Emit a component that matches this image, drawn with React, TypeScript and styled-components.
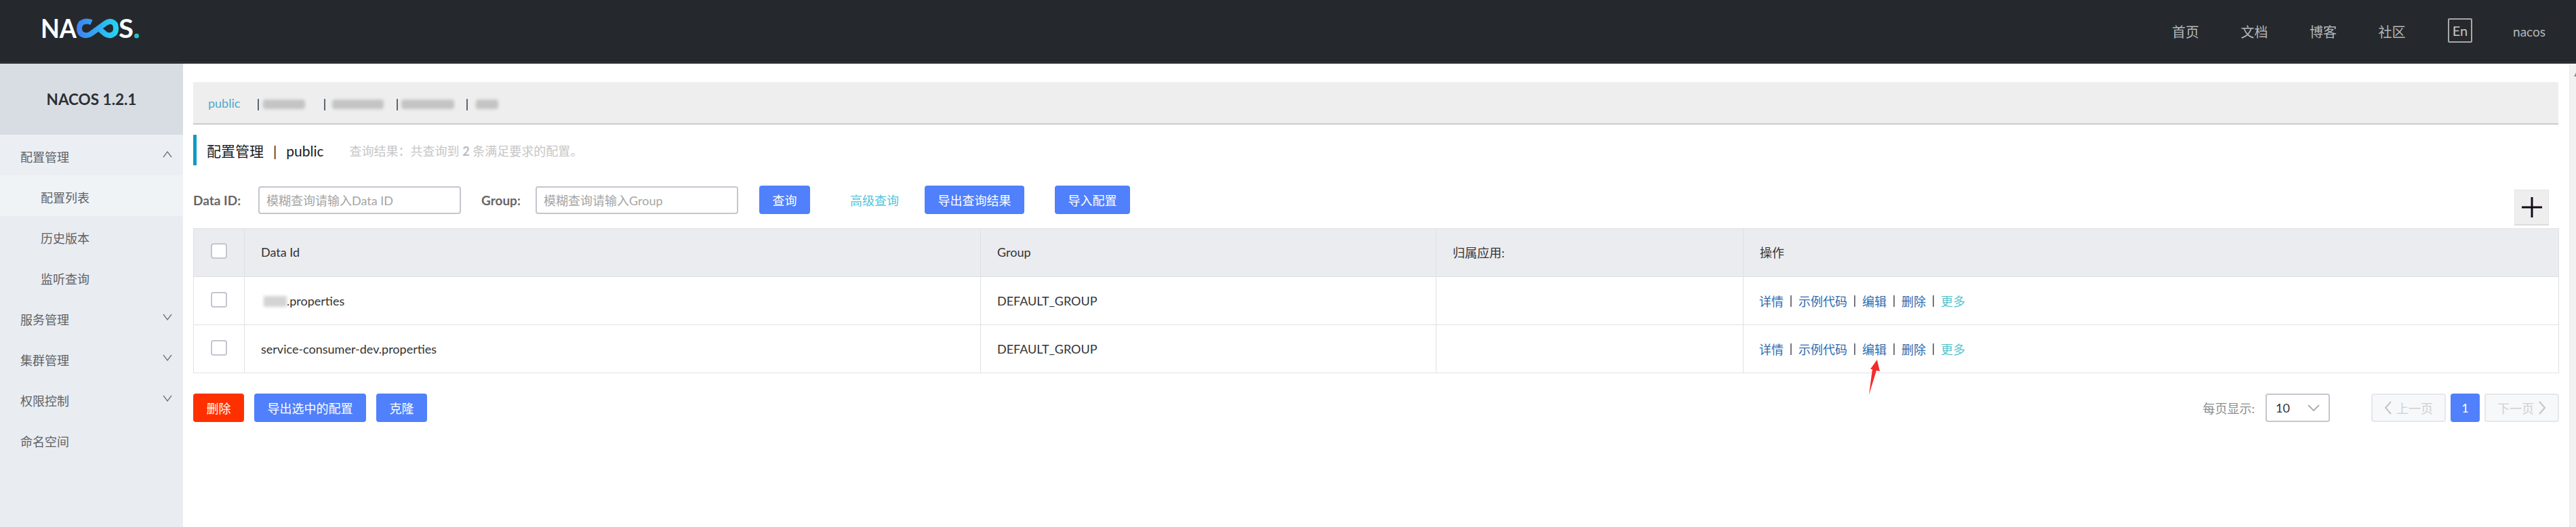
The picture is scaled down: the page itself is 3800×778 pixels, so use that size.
import { createGlobalStyle, styled } from 'styled-components';

const GlobalStyle = createGlobalStyle`
    html, body {
        margin: 0;
        height: 778px;
        overflow: hidden;
        background: #fff;
    }
    body {
        font-family: Lato, "Noto Sans CJK SC", sans-serif;
        font-size: 18px;
        color: #333;
    }
    * { box-sizing: border-box; }
`;

const Page = styled.div`
    width: 3800px;
    height: 778px;
    display: flex;
    flex-direction: column;
`;

const Header = styled.header`
    height: 94px;
    flex: none;
    background: #25292d;
    border-bottom: 4px solid #2a2e32;
    box-shadow: inset 0 -1px 0 #1f2226;
    display: flex;
    align-items: center;
    justify-content: space-between;
    padding: 0 45px 0 60px;
`;

const LogoMark = styled.svg`
    width: 146px;
    height: 50px;
    margin-top: -6px;
`;

const HeaderNav = styled.nav`
    display: flex;
    align-items: center;
    color: #b4b6b8;
    font-size: 20px;
    margin-top: 3px;
`;

const HeaderLink = styled.span`
    width: 101.5px;
`;

const LangButton = styled.span`
    width: 36px;
    height: 36px;
    margin: -4px 60px 0 1px;
    border: 2px solid #a6a8aa;
    border-radius: 2px;
    display: flex;
    align-items: center;
    justify-content: center;
    color: #c4c6c8;
`;

const UserName = styled.span`
    font-size: 19px;
`;

const Body = styled.div`
    flex: 1;
    display: flex;
    min-height: 0;
`;

const Sidebar = styled.aside`
    width: 270px;
    flex: none;
    background: #e9edf1;
`;

const Version = styled.div`
    height: 105px;
    background: #d8dde3;
    display: flex;
    align-items: center;
    justify-content: center;
    font-size: 22.5px;
    font-weight: 700;
    color: #2c2f33;
`;

const NavRow = styled.div<{ $child?: boolean; $active?: boolean; $parent?: boolean }>`
    height: 60px;
    display: flex;
    align-items: center;
    justify-content: space-between;
    padding: 3px 16px 0 ${(p) => (p.$child ? 60 : 30)}px;
    color: #5f6266;
    background: ${(p) => (p.$active ? '#f0f3f6' : p.$parent ? '#ebeff3' : 'transparent')};
`;

const Chevron = styled.svg`
    width: 14px;
    height: 10px;
    margin-top: -6px;
    fill: none;
    stroke: #74777b;
    stroke-width: 1.4;
`;

const Main = styled.main`
    flex: 1;
    min-width: 0;
    padding: 27px 16px 0 15px;
`;

const Tabs = styled.div`
    height: 63px;
    background: #eeeeee;
    border-top: 1px solid #f2f2f2;
    border-bottom: 2px solid #cccccc;
    display: flex;
    align-items: center;
    padding: 4px 0 0 22px;
`;

const TabActive = styled.span`
    width: 73px;
    color: #4fa9cb;
    font-size: 18px;
    margin-top: -4px;
`;

const TabDivider = styled.span<{ $gap: number }>`
    width: 2px;
    height: 17px;
    background: #5e6670;
    margin-right: ${(p) => p.$gap}px;
`;

const Redacted = styled.span<{ $width: number; $right: number }>`
    width: ${(p) => p.$width}px;
    height: 14px;
    margin-right: ${(p) => p.$right}px;
    background: #c4c4c4;
    border-radius: 4px;
    filter: blur(2px);
`;

const TitleRow = styled.div`
    height: 45px;
    margin-top: 15px;
    border-left: 5px solid #0e9bc4;
    display: flex;
    align-items: center;
    padding-left: 15px;
`;

const PageTitle = styled.h1`
    margin: 0;
    font-size: 21px;
    font-weight: 400;
    color: #1c1c1c;
    display: flex;
    align-items: baseline;
    gap: 14px;
`;

const ResultNote = styled.span`
    margin-left: 38px;
    color: #c6c6c6;
    b { color: #bbb; }
`;

const FilterRow = styled.div`
    position: relative;
    height: 42px;
    margin-top: 30px;
    display: flex;
    align-items: center;
`;

const FilterLabel = styled.label<{ $width: number }>`
    width: ${(p) => p.$width}px;
    font-size: 19px;
    font-weight: 700;
    color: #666;
    flex: none;
`;

const TextInput = styled.div`
    width: 299px;
    height: 41px;
    border: 2px solid #c4c6cf;
    border-radius: 4px;
    padding-left: 10px;
    display: flex;
    align-items: center;
    color: #a5a5a5;
    margin-right: 30px;
`;

const Button = styled.button<{ $tone?: 'danger'; $left?: number; $width: number }>`
    width: ${(p) => p.$width}px;
    height: 42px;
    margin-left: ${(p) => p.$left ?? 0}px;
    flex: none;
    border: 0;
    border-radius: 4px;
    background: ${(p) => (p.$tone === 'danger' ? '#ff3000' : '#5080fb')};
    color: #fff;
    padding: 0;
    font: inherit;
`;

const AdvancedLink = styled.a`
    margin-left: 59px;
    color: #4ec5d9;
    flex: none;
`;

const AddButton = styled.div`
    position: absolute;
    right: 14px;
    top: 6px;
    width: 51px;
    height: 53px;
    background: #eeeeee;
    border: 1px solid #e4e4e4;
    border-bottom: 2px solid #dcdcdc;
    display: flex;
    align-items: center;
    justify-content: center;
`;

const AddIcon = styled.svg`
    width: 30px;
    height: 30px;
    stroke: #120a1c;
    stroke-width: 3;
`;

const Table = styled.table`
    width: 100%;
    margin-top: 21px;
    border-collapse: collapse;
    table-layout: fixed;
`;

const HeadCell = styled.th`
    height: 71px;
    background: #ebecf0;
    border: 1px solid #dfe0e4;
    padding: 0 0 2px 24px;
    font-weight: 400;
    text-align: left;
    color: #333;
`;

const Cell = styled.td`
    position: relative;
    height: 71px;
    border: 1px solid #e0e1e5;
    padding: 0 0 0 24px;
    color: #333;
`;

const Checkbox = styled.span`
    display: block;
    width: 24px;
    height: 23px;
    margin: -3px 0 0 1px;
    background: #fff;
    border: 2px solid #c4c6cf;
    border-radius: 4px;
`;

const RedactedName = styled.span`
    display: inline-block;
    width: 34px;
    height: 16px;
    margin-left: 4px;
    vertical-align: -2px;
    background: #d4d4d4;
    filter: blur(2px);
`;

const Actions = styled.div`
    display: flex;
    align-items: center;
    gap: 10px;
    margin-left: -1px;
`;

const ActionLink = styled.a<{ $more?: boolean }>`
    color: ${(p) => (p.$more ? '#58c4cf' : '#2d6bb0')};
`;

const ActionDivider = styled.span`
    width: 2px;
    height: 17px;
    background: #77777b;
`;

const AnnotationArrow = styled.svg`
    position: absolute;
    left: 182px;
    top: 51px;
    width: 22px;
    height: 54px;
    fill: #f42b2b;
`;

const Footer = styled.div`
    margin-top: 30px;
    display: flex;
    align-items: center;
    gap: 15px;
`;

const Pagination = styled.div`
    margin-left: auto;
    display: flex;
    align-items: center;
    gap: 7px;
    margin-right: -1px;
`;

const PageSizeLabel = styled.span`
    color: #8c8c8c;
    margin-right: 9px;
`;

const PageSize = styled.div`
    width: 95px;
    height: 42px;
    margin-right: 54px;
    border: 2px solid #c4c6cf;
    border-radius: 4px;
    display: flex;
    align-items: center;
    justify-content: space-between;
    padding: 0 13px;
    color: #333;
`;

const SelectChevron = styled.svg`
    width: 18px;
    height: 10px;
    fill: none;
    stroke: #9a9a9a;
    stroke-width: 1.6;
`;

const PagerButton = styled.div`
    width: 110px;
    height: 42px;
    background: #f7f8fa;
    border: 2px solid #e6e7eb;
    border-radius: 4px;
    display: flex;
    align-items: center;
    justify-content: center;
    gap: 6px;
    color: #cfcfcf;
`;

const PagerCurrent = styled.div`
    width: 43px;
    height: 42px;
    background: #5080fb;
    border-radius: 4px;
    display: flex;
    align-items: center;
    justify-content: center;
    color: #fff;
`;

const PagerChevron = styled.svg`
    width: 12px;
    height: 22px;
    fill: none;
    stroke: #c4c4c4;
    stroke-width: 2;
`;

const Scrollbar = styled.div`
    width: 10px;
    flex: none;
    margin-top: 1px;
    padding: 12px 0 0 6px;
    background: #f1f1f1;
    border-left: 1px solid #ebebeb;
`;

const ScrollArrow = styled.svg`
    display: block;
    width: 3px;
    height: 6px;
    fill: #8a8a8a;
`;

const navItems = [
    { label: '配置管理', open: true },
    { label: '配置列表', child: true, active: true },
    { label: '历史版本', child: true },
    { label: '监听查询', child: true },
    { label: '服务管理', closed: true },
    { label: '集群管理', closed: true },
    { label: '权限控制', closed: true },
    { label: '命名空间' },
];

const rows = [{ redacted: true, name: '.properties', arrow: false }, { redacted: false, name: 'service-consumer-dev.properties', arrow: true }];

const Logo = () => (
    <LogoMark viewBox="0 0 146 50">
        <defs>
            <linearGradient id="logoLoop" gradientUnits="userSpaceOnUse" x1="53" x2="115" y1="0" y2="0">
                <stop offset="0" stopColor="#3f80f4" />
                <stop offset="1" stopColor="#22d8f2" />
            </linearGradient>
        </defs>
        <text x="0" y="39" fontFamily="Lato" fontSize="39" fontWeight="700" fill="#fff" textLength="53" lengthAdjust="spacingAndGlyphs">NA</text>
        <path d="M75 16C68 13 57 14 57 25C57 36 68 37 74 33L96 17C102 13 111 14 111 25C111 36 100 37 95 33L88 27" fill="none" stroke="url(#logoLoop)" strokeWidth="8" />
        <text x="115" y="39" fontFamily="Lato" fontSize="39" fontWeight="700" fill="#fff" textLength="22" lengthAdjust="spacingAndGlyphs">S</text>
        <circle cx="141.500" cy="36" r="3.500" fill="#20c4c8" />
    </LogoMark>
);

const App = () => {
    return (
        <Page>
            <GlobalStyle />
            <Header>
                <Logo />
                <HeaderNav>
                    <HeaderLink>首页</HeaderLink>
                    <HeaderLink>文档</HeaderLink>
                    <HeaderLink>博客</HeaderLink>
                    <HeaderLink>社区</HeaderLink>
                    <LangButton>En</LangButton>
                    <UserName>nacos</UserName>
                </HeaderNav>
            </Header>
            <Body>
                <Sidebar>
                    <Version>NACOS 1.2.1</Version>
                    {navItems.map((item) => (
                        <NavRow key={item.label} $child={item.child} $active={item.active} $parent={item.open}>
                            {item.label}
                            {item.open && <Chevron viewBox="0 0 14 10"><path d="M1 9 7 1l6 8" /></Chevron>}
                            {item.closed && <Chevron viewBox="0 0 14 10"><path d="M1 1l6 8 6-8" /></Chevron>}
                        </NavRow>
                    ))}
                </Sidebar>
                <Main>
                    <Tabs>
                        <TabActive>public</TabActive>
                        <TabDivider $gap={6} />
                        <Redacted $width={62} $right={28} />
                        <TabDivider $gap={10} />
                        <Redacted $width={76} $right={19} />
                        <TabDivider $gap={5} />
                        <Redacted $width={78} $right={18} />
                        <TabDivider $gap={12} />
                        <Redacted $width={33} $right={0} />
                    </Tabs>
                    <TitleRow>
                        <PageTitle>
                            <span>配置管理</span>
                            <span>|</span>
                            <span>public</span>
                        </PageTitle>
                        <ResultNote>查询结果：共查询到 <b>2</b> 条满足要求的配置。</ResultNote>
                    </TitleRow>
                    <FilterRow>
                        <FilterLabel $width={96}>Data ID:</FilterLabel>
                        <TextInput>模糊查询请输入Data ID</TextInput>
                        <FilterLabel $width={80}>Group:</FilterLabel>
                        <TextInput>模糊查询请输入Group</TextInput>
                        <Button $width={75} $left={1}>查询</Button>
                        <AdvancedLink>高级查询</AdvancedLink>
                        <Button $width={147} $left={38}>导出查询结果</Button>
                        <Button $width={111} $left={45}>导入配置</Button>
                        <AddButton>
                            <AddIcon viewBox="0 0 30 30"><path d="M15 0v30M0 15h30" /></AddIcon>
                        </AddButton>
                    </FilterRow>
                    <Table>
                        <colgroup>
                            <col width="75" />
                            <col width="1086" />
                            <col width="672" />
                            <col width="453" />
                            <col width="1203" />
                        </colgroup>
                        <thead>
                            <tr>
                                <HeadCell><Checkbox /></HeadCell>
                                <HeadCell>Data Id</HeadCell>
                                <HeadCell>Group</HeadCell>
                                <HeadCell>归属应用:</HeadCell>
                                <HeadCell>操作</HeadCell>
                            </tr>
                        </thead>
                        <tbody>
                            {rows.map((row) => (
                                <tr key={row.name}>
                                    <Cell><Checkbox /></Cell>
                                    <Cell>{row.redacted && <RedactedName />}{row.name}</Cell>
                                    <Cell>DEFAULT_GROUP</Cell>
                                    <Cell />
                                    <Cell>
                                        <Actions>
                                            <ActionLink>详情</ActionLink>
                                            <ActionDivider />
                                            <ActionLink>示例代码</ActionLink>
                                            <ActionDivider />
                                            <ActionLink>编辑</ActionLink>
                                            <ActionDivider />
                                            <ActionLink>删除</ActionLink>
                                            <ActionDivider />
                                            <ActionLink $more>更多</ActionLink>
                                        </Actions>
                                        {row.arrow && (
                                            <AnnotationArrow viewBox="0 0 22 54">
                                                <path d="M15 0 19 17 14 16 3 52 8 14 5 14Z" />
                                            </AnnotationArrow>
                                        )}
                                    </Cell>
                                </tr>
                            ))}
                        </tbody>
                    </Table>
                    <Footer>
                        <Button $tone="danger" $width={75}>删除</Button>
                        <Button $width={165}>导出选中的配置</Button>
                        <Button $width={75}>克隆</Button>
                        <Pagination>
                            <PageSizeLabel>每页显示:</PageSizeLabel>
                            <PageSize>
                                10
                                <SelectChevron viewBox="0 0 18 10"><path d="M1 1l8 8 8-8" /></SelectChevron>
                            </PageSize>
                            <PagerButton>
                                <PagerChevron viewBox="0 0 12 22"><path d="M10 2 2 11l8 9" /></PagerChevron>
                                上一页
                            </PagerButton>
                            <PagerCurrent>1</PagerCurrent>
                            <PagerButton>
                                下一页
                                <PagerChevron viewBox="0 0 12 22"><path d="M2 2l8 9-8 9" /></PagerChevron>
                            </PagerButton>
                        </Pagination>
                    </Footer>
                </Main>
                <Scrollbar>
                    <ScrollArrow viewBox="0 0 3 6"><path d="M3 0v6H0Z" /></ScrollArrow>
                </Scrollbar>
            </Body>
        </Page>
    );
};

export default App;
